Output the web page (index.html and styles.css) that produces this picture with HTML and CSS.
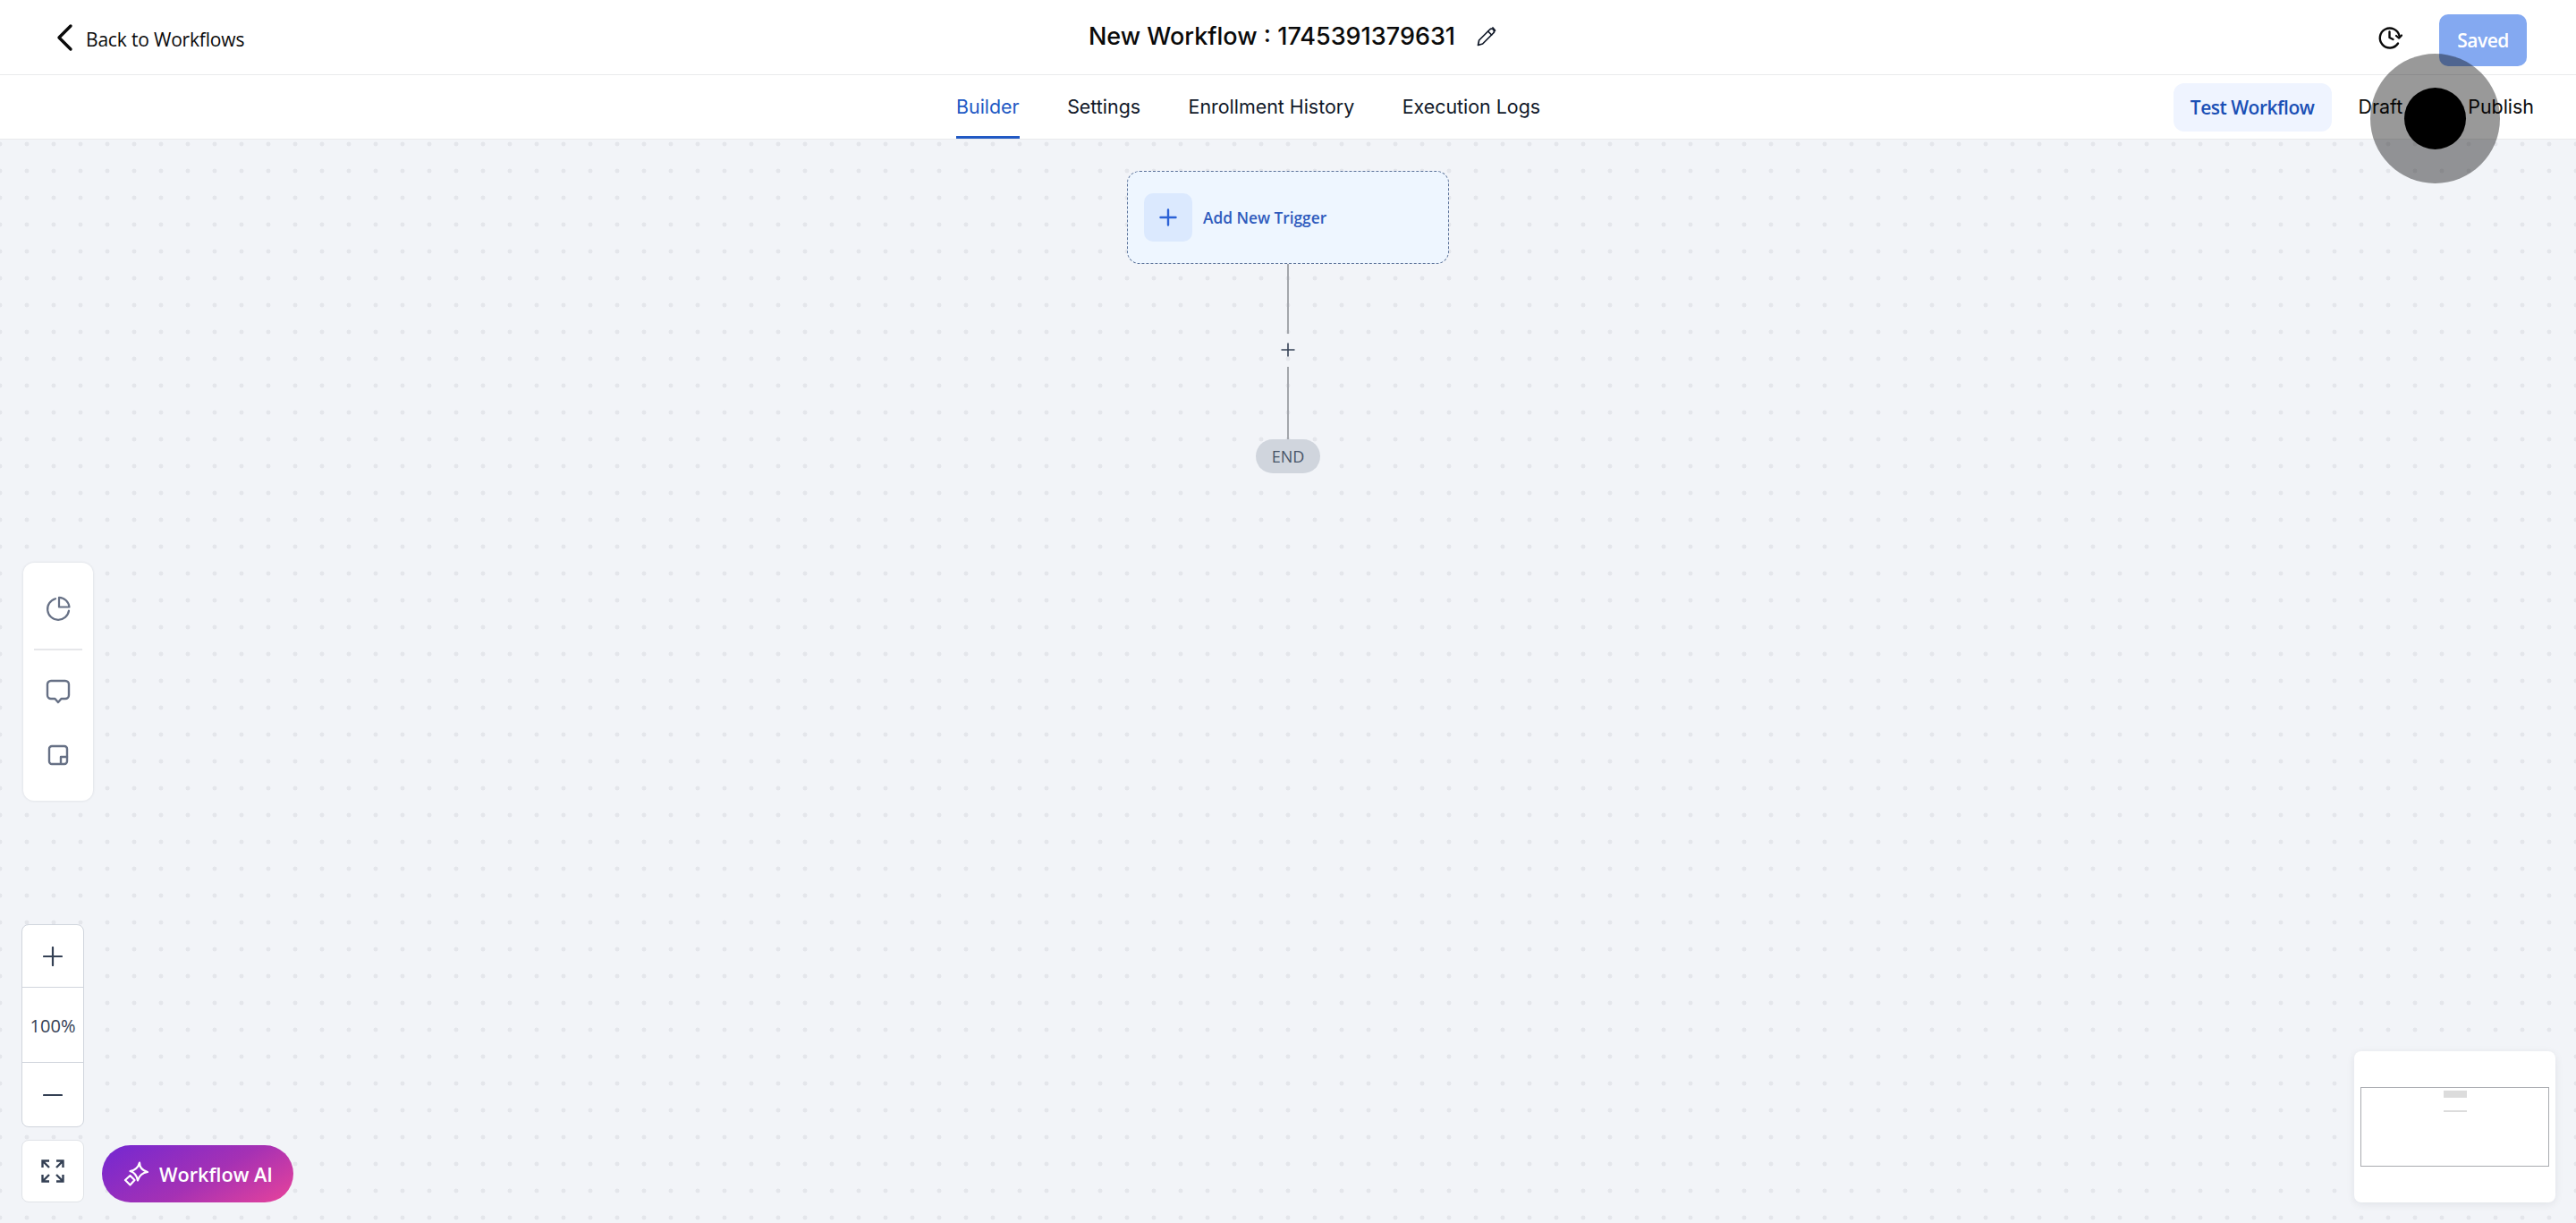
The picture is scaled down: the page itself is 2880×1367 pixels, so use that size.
FILE: index.html
```html
<!DOCTYPE html>
<html lang="en">
<head>
<meta charset="utf-8">
<title>New Workflow</title>
<link rel="stylesheet" href="styles.css">
</head>
<body>
<div class="app">
  <header class="topbar">
    <a class="back">
      <svg class="back-icon" width="20" height="32" viewBox="0 0 20 32"><path d="M17 3 L4 16 L17 29" fill="none" stroke="#0a0a0a" stroke-width="3.4" stroke-linecap="round" stroke-linejoin="round"/></svg>
      <span>Back to Workflows</span>
    </a>
    <div class="title">
      <span>New Workflow : 1745391379631</span>
      <svg width="24" height="24" viewBox="0 0 24 24" fill="none" stroke="#101828" stroke-width="1.7" stroke-linecap="round" stroke-linejoin="round"><path d="M2.5 21.5 L3.6 16 L15.6 4 A2.4 2.4 0 0 1 19.6 8 L7.6 20 Z"/><path d="M13.6 6 L17.6 10"/><path d="M19 2 L21.5 5"/></svg>
    </div>
    <div class="top-actions">
      <svg class="history" width="28" height="28" viewBox="0 0 28 28" fill="none" stroke="#0a0a0a" stroke-width="2.4" stroke-linecap="round" stroke-linejoin="round"><path d="M24.5 12 A11 11 0 1 0 23 20.5"/><path d="M13.5 7.5 V14 L17.5 16"/><path d="M27 11.5 L24.2 14.6 L21 12" stroke-width="2.2"/></svg>
      <button class="saved">Saved</button>
    </div>
  </header>
  <nav class="tabbar">
    <div class="tabs">
      <a class="tab active">Builder</a>
      <a class="tab">Settings</a>
      <a class="tab">Enrollment History</a>
      <a class="tab">Execution Logs</a>
    </div>
    <div class="tab-actions">
      <button class="test">Test Workflow</button>
      <div class="publish-toggle"><span>Draft</span><span>Publish</span></div>
    </div>
  </nav>
  <main class="canvas">
    <div class="flow">
      <div class="trigger">
        <span class="trigger-plus"><svg width="20" height="20" viewBox="0 0 20 20"><path d="M10 1.5 V18.5 M1.5 10 H18.5" stroke="#2c62d6" stroke-width="2.4" stroke-linecap="round"/></svg></span>
        <span class="trigger-label">Add New Trigger</span>
      </div>
      <div class="line line-top"></div>
      <svg class="add" width="16" height="16" viewBox="0 0 16 16"><path d="M8 0.5 V15.5 M0.5 8 H15.5" stroke="#344054" stroke-width="1.6"/></svg>
      <div class="line line-bottom"></div>
      <div class="end">END</div>
    </div>

    <aside class="tools">
      <svg width="28" height="28" viewBox="0 0 28 28" fill="none" stroke="#667085" stroke-width="2.2" stroke-linecap="round" stroke-linejoin="round"><path d="M11 3.2 A12 12 0 1 0 26 16.5"/><path d="M15 1.8 A12 12 0 0 1 26.5 12.5 H15 Z"/></svg>
      <div class="tools-divider"></div>
      <svg class="tool-comment" width="28" height="28" viewBox="0 0 28 28" fill="none" stroke="#667085" stroke-width="2.4" stroke-linecap="round" stroke-linejoin="round"><path d="M6 2 H22 A4 4 0 0 1 26 6 V18 A4 4 0 0 1 22 22 H17.5 L14 26 L10.5 22 H6 A4 4 0 0 1 2 18 V6 A4 4 0 0 1 6 2 Z"/></svg>
      <svg class="tool-note" width="24" height="24" viewBox="0 0 24 24" fill="none" stroke="#667085" stroke-width="2.4" stroke-linecap="round" stroke-linejoin="round"><path d="M14 22 H5 A3 3 0 0 1 2 19 V5 A3 3 0 0 1 5 2 H19 A3 3 0 0 1 22 5 V14"/><path d="M22 14 H15 V22 H19 A3 3 0 0 0 22 19 Z"/></svg>
    </aside>

    <div class="zoom">
      <button class="zoom-btn zoom-plus"><svg width="22" height="22" viewBox="0 0 22 22"><path d="M11 1 V21 M1 11 H21" stroke="#344054" stroke-width="2.2" stroke-linecap="round"/></svg></button>
      <div class="zoom-val">100%</div>
      <button class="zoom-btn zoom-minus"><svg width="22" height="4" viewBox="0 0 22 4"><path d="M1 2 H21" stroke="#344054" stroke-width="2.2" stroke-linecap="round"/></svg></button>
    </div>
    <button class="fit"><svg width="26" height="26" viewBox="0 0 26 26" fill="none" stroke="#344054" stroke-width="2.4"><path d="M1.5 9 V1.5 H9 M1.5 1.5 L9 9"/><path d="M24.5 9 V1.5 H17 M24.5 1.5 L17 9"/><path d="M1.5 17 V24.5 H9 M1.5 24.5 L9 17"/><path d="M24.5 17 V24.5 H17 M24.5 24.5 L17 17"/></svg></button>
    <button class="ai">
      <svg width="28" height="28" viewBox="0 0 28 28" fill="none" stroke="#fff" stroke-width="2.2" stroke-linejoin="round"><path d="M18 1.5 Q18 9.5 27 12 Q18.5 13 16 21.5 Q14.5 13 7.5 11 Q16 9.5 18 1.5 Z"/><path d="M7.5 16 L12.5 21 L7.5 26.5 L2 21 Z"/></svg>
      <span>Workflow AI</span>
    </button>

    <div class="minimap">
      <div class="minimap-view">
        <div class="mini-node"></div>
        <div class="mini-line"></div>
      </div>
    </div>
  </main>
  <div class="click-ring"><div class="click-dot"></div></div>
</div>
</body>
</html>
```

FILE: styles.css
```css
* { box-sizing: border-box; }
html, body { margin: 0; height: 100%; }
body { font-family: "Inter", "Liberation Sans", sans-serif; color: #0a0a0a; background: #fff; overflow: hidden; }
button { font: inherit; border: 0; padding: 0; }

.app { position: relative; width: 2880px; height: 1367px; display: flex; flex-direction: column; }

.topbar { flex: 0 0 84px; display: grid; grid-template-columns: 1fr auto 1fr; align-items: center; padding: 0 55px 0 62px; border-bottom: 1px solid #e9eaec; }
.back { display: flex; align-items: center; gap: 14px; font-family: "Open Sans", sans-serif; font-size: 21px; font-weight: 500; letter-spacing: -0.18px; padding-top: 4px; }
.back-icon { margin-top: -3px; }
.title { display: flex; align-items: center; gap: 23px; font-size: 27px; font-weight: 500; margin-top: -2px; margin-left: 4px; }
.top-actions { display: flex; justify-content: flex-end; align-items: center; gap: 41px; }
.saved { width: 98px; height: 58px; border-radius: 10px; background: #84a9f1; color: #fff; font-family: "Open Sans", sans-serif; font-size: 21px; font-weight: 600; letter-spacing: -0.5px; margin-top: 6px; }
.history { margin-top: 1px; }

.tabbar { flex: 0 0 72px; display: flex; justify-content: space-between; padding: 0 47px 0 1069px; border-bottom: 1px solid #e9eaec; }
.tabs { display: flex; gap: 53.5px; }
.tab { display: flex; align-items: center; height: 71px; font-size: 21.4px; font-weight: 400; color: #101828; border-bottom: 3px solid transparent; padding-top: 1px; }
.tab.active { color: #2159c4; border-bottom-color: #2159c4; }
.tab-actions { display: flex; align-items: center; gap: 30px; }
.test { width: 177px; height: 54px; border-radius: 12px; background: #eff4ff; color: #1a4fb5; font-family: "Open Sans", sans-serif; font-size: 21px; font-weight: 600; letter-spacing: -0.5px; margin-top: 1px; }
.publish-toggle { display: flex; gap: 73px; font-size: 21.4px; margin-top: -2px; }

.canvas { position: relative; flex: 1; background-color: #f2f4f8; background-image: radial-gradient(circle at center, #e4e6eb 2.2px, transparent 2.7px); background-size: 30px 30px; background-position: -15px -10px; }

.flow { position: absolute; left: 1260px; top: 35px; width: 360px; display: flex; flex-direction: column; align-items: center; }
.trigger { width: 360px; height: 104px; display: flex; align-items: center; gap: 12px; padding-left: 18px; background: #eef6ff; border: 1.5px dashed #5b7299; border-radius: 14px; }
.trigger-plus { width: 54px; height: 54px; display: flex; align-items: center; justify-content: center; background: #dbe9fe; border-radius: 10px; }
.trigger-label { font-family: "Open Sans", sans-serif; font-size: 17.3px; font-weight: 600; color: #2f5bbd; }
.line { width: 2px; background: #a3a6ac; }
.line-top { height: 78px; }
.add { margin: 10px 0 11px; }
.line-bottom { height: 81px; }
.end { width: 72px; height: 38px; display: flex; align-items: center; justify-content: center; border-radius: 19px; background: #d0d5dd; color: #475467; font-family: "Open Sans", sans-serif; font-size: 18px; }

.tools { position: absolute; left: 26px; top: 473px; width: 78px; height: 266px; display: flex; flex-direction: column; align-items: center; padding-top: 37px; background: #fff; border-radius: 12px; box-shadow: 0 0 3px rgba(16,24,40,.12); }
.tools-divider { width: 54px; height: 2px; background: #e6e7ea; margin: 31px 0 32px; }
.tool-note { margin-top: 45px; }

.zoom { position: absolute; left: 24px; top: 877px; width: 70px; height: 227px; display: flex; flex-direction: column; background: #fff; border: 1px solid #d0d5dd; border-radius: 8px; }
.zoom-btn { background: transparent; display: flex; align-items: center; justify-content: center; }
.zoom-plus { height: 70px; border-bottom: 1px solid #d0d5dd; }
.zoom-val { height: 84px; display: flex; align-items: center; justify-content: center; padding-top: 2px; font-family: "Open Sans", sans-serif; font-size: 20px; color: #344054; border-bottom: 1px solid #d0d5dd; }
.zoom-minus { flex: 1; }
.fit { position: absolute; left: 24px; top: 1118px; width: 70px; height: 70px; display: flex; align-items: center; justify-content: center; background: #fff; border: 1px solid #e0e3e8; border-radius: 8px; }
.ai { position: absolute; left: 114px; top: 1124px; width: 214px; height: 64px; display: flex; align-items: center; gap: 12px; padding-left: 24px; border-radius: 32px; background: linear-gradient(150deg, #7328d2 0%, #a531b4 55%, #e9439a 100%); color: #fff; font-family: "Open Sans", sans-serif; font-size: 21.7px; font-weight: 600; }

.minimap { position: absolute; right: 23px; top: 1019px; width: 225px; height: 169px; padding: 40px 7px 0; background: #fff; border-radius: 8px; box-shadow: 0 2px 10px rgba(16,24,40,.08); }
.minimap-view { height: 89px; border: 1px solid #a9abb0; display: flex; flex-direction: column; align-items: center; padding-top: 3px; }
.mini-node { width: 26px; height: 8px; background: #dcdcdc; }
.mini-line { width: 26px; height: 2px; background: #dcdcdc; margin-top: 14px; }

.click-ring { position: absolute; left: 2650px; top: 60px; width: 145px; height: 145px; display: flex; align-items: center; justify-content: center; border-radius: 50%; background: rgba(0,0,0,.4); }
.click-dot { width: 69px; height: 69px; border-radius: 50%; background: #000; }
```
